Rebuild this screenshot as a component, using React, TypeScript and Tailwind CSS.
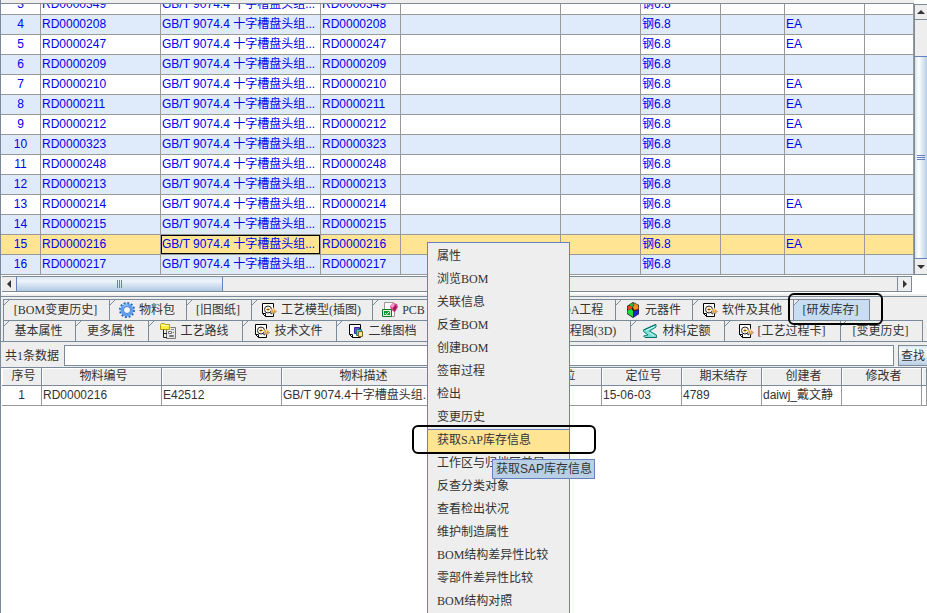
import type { ReactNode } from 'react';
import clsx from 'clsx';

interface Part {
  no: number;
  code: string;
  unit?: string;
}

interface TabItem {
  label: string;
  width: string;
  icon?: ReactNode;
  active?: boolean;
}

const parts: Part[] = [
  { no: 3, code: 'RD0000349' },
  { no: 4, code: 'RD0000208', unit: 'EA' },
  { no: 5, code: 'RD0000247', unit: 'EA' },
  { no: 6, code: 'RD0000209' },
  { no: 7, code: 'RD0000210', unit: 'EA' },
  { no: 8, code: 'RD0000211', unit: 'EA' },
  { no: 9, code: 'RD0000212', unit: 'EA' },
  { no: 10, code: 'RD0000323', unit: 'EA' },
  { no: 11, code: 'RD0000248' },
  { no: 12, code: 'RD0000213' },
  { no: 13, code: 'RD0000214', unit: 'EA' },
  { no: 14, code: 'RD0000215' },
  { no: 15, code: 'RD0000216', unit: 'EA' },
  { no: 16, code: 'RD0000217' },
];

const SELECTED = 15;

const menuItems = [
  '属性',
  '浏览BOM',
  '关联信息',
  '反查BOM',
  '创建BOM',
  '签审过程',
  '检出',
  '变更历史',
  '获取SAP库存信息',
  '工作区与归档区差异',
  '反查分类对象',
  '查看检出状况',
  '维护制造属性',
  'BOM结构差异性比较',
  '零部件差异性比较',
  'BOM结构对照',
];

const stockHeaders = ['序号', '物料编号', '财务编号', '物料描述', '数量', '单位', '定位号', '期末结存', '创建者', '修改者', ''];
const stockRow = ['1', 'RD0000216', 'E42512', 'GB/T 9074.4十字槽盘头组...', '', '', '15-06-03', '4789', 'daiwj_戴文静', '', ''];

function Icon({ children }: { children: ReactNode }) {
  return (
    <svg viewBox="0 0 16 16" className="size-4 shrink-0" aria-hidden="true">
      {children}
    </svg>
  );
}

function GearIcon() {
  return (
    <Icon>
      <circle cx="8" cy="8" r="7" fill="none" stroke="#2a62b8" strokeWidth="2" strokeDasharray="2 1.67" />
      <circle cx="8" cy="8" r="5" fill="none" stroke="#5aa0f8" strokeWidth="3" />
      <path d="M4 5a5 5 0 0 1 5-2" fill="none" stroke="#a9d0ff" strokeWidth="1" />
      <circle cx="8" cy="8" r="3.5" fill="#f4f6fa" stroke="#2a5cb0" strokeWidth="0.7" />
    </Icon>
  );
}

function CadIcon() {
  return (
    <Icon>
      <path d="M1.5 1.5h11v13h-8l-3-3z" fill="#fff" stroke="#000" />
      <path d="M1.5 11.5h3v3" fill="none" stroke="#000" />
      <circle cx="7" cy="7.5" r="3.5" fill="#fff" stroke="#222" />
      <path d="M7 5.5v4M5 7.5h4" stroke="#e8960c" />
      <path d="M6.5 7h1v1h-1z" fill="#000" />
      <path d="M8.5 10.5 11 12" stroke="#222" />
      <path d="m12.5 6 3 2.5-3 3-3-3z" fill="#e8a94a" stroke="#fff" strokeWidth="0.6" />
      <path d="m10 9.5 2.5 2.5 3-3" fill="none" stroke="#6b4708" strokeWidth="0.8" />
      <path d="M12 7.5h1v1h-1z" fill="#fff" />
    </Icon>
  );
}

function TreeIcon() {
  return (
    <Icon>
      <path d="M10.5 4.5h5v11h-9v-9" fill="#e8e8e8" stroke="#777" />
      <path d="M3.5 6v8.5H7M3.5 10.5H7" fill="none" stroke="#222" />
      <path d="M.5 1.5 1.5.5h3l1 1h4v5h-9z" fill="#ffed38" stroke="#a08c00" strokeWidth="0.8" />
      <path d="M1 2.5h8" stroke="#fffbb0" />
      <path d="M8.5 8.5h3v2h-3zM9.5 12.5h4v1h-4z" fill="#fff" stroke="#777" />
      <path d="M11 6.5h3M12.5 9.5H14" stroke="#888" />
    </Icon>
  );
}

function PcbIcon() {
  return (
    <Icon>
      <path d="M2.5.5h9l1 2v12h-10z" fill="#fff" stroke="#999" />
      <path d="m8 4 3-3 4 1 1 3-3 5-4-2z" fill="#e2418e" />
      <path d="m8 4 3-3 2 2-2 3z" fill="#f59ac4" />
      <path d="m13 3 2 2-3 5-1-4z" fill="#9c1a5d" />
      <path d="M.5 7.5h9v7h-9z" fill="#dff5df" stroke="#087a20" />
      <path d="M2 9h6v4H2z" fill="#149a30" />
      <path d="m3 11 1.5 1.5L7.5 9.5" fill="none" stroke="#fff" />
    </Icon>
  );
}

function CubeIcon() {
  return (
    <Icon>
      <path d="m8 0 6 3v9l-6 4-6-4V4z" fill="#222" />
      <path d="m5 2 3-1 1 2-2 2-2-1z" fill="#30b838" />
      <path d="m8.500 1 4.500 2 .5 4-4 1-2-3 2-1.500z" fill="#ff9020" />
      <path d="m2.500 4.500 2-1L7 5v1.500L3 8z" fill="#f04a18" />
      <path d="M2.500 8.500 6.500 7 8 9v6l-5.500-3.500z" fill="#20dc38" />
      <path d="m9 9.500 4.500-1.500v4L9 15z" fill="#1828d8" />
    </Icon>
  );
}

function SheetIcon() {
  return (
    <Icon>
      <path d="M14 1.500V4L7.500 8l7 4v2.500H3L1.500 13 6 12 1.500 8.500V7z" fill="#78ded0" stroke="#12857f" />
      <path d="M12.500 3.500 4 7.500M7 9.500l5 3.500" stroke="#c8fff6" />
      <path d="m1.500 7 12-5.500M3 14.500h11.500" stroke="#0a6a68" />
    </Icon>
  );
}

function DrawingIcon() {
  return (
    <Icon>
      <path d="M1.500 1.500h11v13h-8l-3-3z" fill="#fff" stroke="#000" />
      <path d="M1.500 11.500h3v3" fill="none" stroke="#000" />
      <path d="M6.500 4.500h5v6h-5z" fill="#6b4be0" stroke="#3420a0" />
      <path d="M8.500 6.500h5v6h-5z" fill="#58c8c8" stroke="#187878" />
      <path d="M10.500 8.500h4v5h-4z" fill="#ffe890" stroke="#7a6518" />
    </Icon>
  );
}

const upperTabs: TabItem[] = [
  { label: '[BOM变更历史]', width: 'w-[107px]' },
  { label: '物料包', width: 'w-[77px]', icon: <GearIcon /> },
  { label: '[旧图纸]', width: 'w-[65px]' },
  { label: '工艺模型(插图)', width: 'w-[121px]', icon: <CadIcon /> },
  { label: 'PCB', width: 'w-16', icon: <PcbIcon /> },
  { label: '原理图', width: 'w-[88px]', icon: <DrawingIcon /> },
  { label: 'EDA工程', width: 'w-[91px]', icon: <PcbIcon /> },
  { label: '元器件', width: 'w-[77px]', icon: <CubeIcon /> },
  { label: '软件及其他', width: 'w-[101px]', icon: <CadIcon /> },
  { label: '[研发库存]', width: 'w-[76px]', active: true },
];

const lowerTabs: TabItem[] = [
  { label: '基本属性', width: 'w-[73px]' },
  { label: '更多属性', width: 'w-[73px]' },
  { label: '工艺路线', width: 'w-[94px]', icon: <TreeIcon /> },
  { label: '技术文件', width: 'w-[94px]', icon: <CadIcon /> },
  { label: '二维图档', width: 'w-[94px]', icon: <DrawingIcon /> },
  { label: '三维图档', width: 'w-[71px]' },
  { label: '工艺流程图(3D)', width: 'w-[129px]', icon: <CadIcon /> },
  { label: '材料定额', width: 'w-[94px]', icon: <SheetIcon /> },
  { label: '[工艺过程卡]', width: 'w-[116px]', icon: <CadIcon /> },
  { label: '[变更历史]', width: 'w-[82px]' },
];

function TabRow({ tabs }: { tabs: TabItem[] }) {
  return (
    <div role="tablist" className="flex h-[21px] pl-0.5">
      {tabs.map((tab, i) => (
        <button
          key={tab.label}
          role="tab"
          aria-selected={!!tab.active}
          className={clsx(
            'relative flex shrink-0 items-center justify-center gap-1 overflow-hidden border-t border-r border-[#7a8a99] pr-0.5 leading-4 whitespace-nowrap',
            tab.width,
            tab.active ? 'bg-[#c8ddf2]' : 'bg-[#eeeeee]',
            i === 0 && 'border-l',
          )}
        >
          <svg viewBox="0 0 7 7" className="absolute -top-px -left-px size-[7px]" aria-hidden="true">
            <path d="M0 0h7L0 7z" fill="#eeeeee" />
            <path d="M.5 6.5 6.5.5" stroke="#7a8a99" />
          </svg>
          {tab.icon}
          {tab.label}
        </button>
      ))}
    </div>
  );
}

function Arrow({ points, label, className }: { points: string; label: string; className: string }) {
  return (
    <button aria-label={label} className={clsx('flex shrink-0 items-center justify-center bg-[#eeeeee]', className)}>
      <svg viewBox="0 0 8 8" className="size-2" aria-hidden="true">
        <polygon points={points} fill="#333" />
      </svg>
    </button>
  );
}

function PartsTable() {
  return (
    <div className="min-w-0 flex-1">
      <div className="h-1 border-b border-[#7a8a99] bg-[#eeeeee]" />
      <div className="flex h-[271px] flex-col justify-end overflow-hidden">
        <table className="w-full shrink-0 table-fixed border-separate border-spacing-0 font-['Liberation_Sans','Noto_Sans_CJK_SC',sans-serif] text-[#0000ee]">
          <colgroup>
            <col className="w-10" />
            <col className="w-[120px]" />
            <col className="w-40" />
            <col className="w-20" />
            <col className="w-40" />
            <col className="w-20" />
            <col className="w-20" />
            <col className="w-16" />
            <col className="w-20" />
            <col />
          </colgroup>
          <tbody>
            {parts.map((part) => {
              const selected = part.no === SELECTED;
              const cells = [part.no, part.code, 'GB/T 9074.4 十字槽盘头组...', part.code, '', '', '钢6.8', '', part.unit, ''];
              return (
                <tr
                  key={part.no}
                  className={clsx('h-5', selected ? 'bg-[#ffe494]' : part.no % 2 === 0 ? 'bg-[#dfeafb]' : 'bg-white')}
                >
                  {cells.map((cell, i) => (
                    <td
                      key={i}
                      className={clsx(
                        'overflow-hidden border-r border-b border-[#999] p-0 leading-[19px] whitespace-nowrap',
                        i === 0 ? 'text-center' : 'pl-px',
                        selected && i === 2 && 'ring-1 ring-black ring-inset',
                      )}
                    >
                      {cell}
                    </td>
                  ))}
                </tr>
              );
            })}
          </tbody>
        </table>
      </div>
    </div>
  );
}

function VerticalScroll() {
  return (
    <div className="flex w-[13px] flex-col pt-1">
      <div className="flex flex-1 flex-col border-t border-l border-[#7a8a99] bg-[#eeeeee]">
        <Arrow label="向上滚动" points="0,6 4,2 8,6" className="h-[15px] border-b border-[#7a8a99]" />
        <div className="h-9" />
        <div className="flex flex-1 flex-col items-center justify-center gap-px border-y border-[#6382bf] bg-linear-to-r from-[#d5e3f1] via-white via-30% to-[#b8cfe5]">
          <div className="h-px w-2 bg-[#6382bf]" />
          <div className="h-px w-2 bg-[#6382bf]" />
          <div className="h-px w-2 bg-[#6382bf]" />
        </div>
        <Arrow label="向下滚动" points="0,2 4,6 8,2" className="h-4 border-b border-[#7a8a99]" />
      </div>
    </div>
  );
}

function HorizontalScroll() {
  return (
    <div className="mr-[15px] ml-px flex h-4 border-y border-[#7a8a99] bg-[#eeeeee]">
      <Arrow label="向左滚动" points="6,0 2,4 6,8" className="w-[14px]" />
      <div className="flex w-[207px] items-center justify-center gap-px border-x border-[#6382bf] bg-linear-to-b from-[#dce8f5] via-[#edf3fa] via-30% to-[#b0c9e3]">
        <div className="h-2 w-px bg-[#6382bf]" />
        <div className="h-2 w-px bg-[#6382bf]" />
        <div className="h-2 w-px bg-[#6382bf]" />
      </div>
      <div className="flex-1" />
      <Arrow label="向右滚动" points="2,0 6,4 2,8" className="w-[15px] border-x border-[#7a8a99]" />
    </div>
  );
}

function SearchBar() {
  return (
    <div className="flex h-[21px] items-center">
      <label htmlFor="keyword" className="w-[63px] shrink-0 pl-1 leading-4 whitespace-nowrap">
        共1条数据
      </label>
      <input
        id="keyword"
        className="h-full min-w-0 flex-1 border border-[#7a8a99] bg-white px-1 outline-none"
      />
      <button className="ml-1 h-full w-[29px] shrink-0 overflow-hidden border border-r-0 border-[#7a8a99] bg-linear-to-b from-[#dde8f3] via-white via-30% to-[#b8cfe5] pl-0.5 text-left whitespace-nowrap">
        查找
      </button>
    </div>
  );
}

function StockTable() {
  return (
    <div className="border-t border-[#7a8a99] pl-px">
      <table className="w-full table-fixed border-separate border-spacing-0">
        <colgroup>
          <col className="w-10" />
          <col className="w-[120px]" />
          <col className="w-[120px]" />
          <col className="w-40" />
          <col className="w-20" />
          <col className="w-20" />
          <col className="w-20" />
          <col className="w-20" />
          <col className="w-20" />
          <col className="w-20" />
          <col />
        </colgroup>
        <thead>
          <tr className="h-[18px] bg-[#eeeeee]">
            {stockHeaders.map((header, i) => (
              <th
                key={i}
                className="overflow-hidden border-r border-b border-[#7a8a99] p-0 pl-1 leading-[17px] font-normal whitespace-nowrap shadow-[inset_1px_1px_0_#fff]"
              >
                {header}
              </th>
            ))}
          </tr>
        </thead>
        <tbody className="font-['Liberation_Sans','Noto_Sans_CJK_SC',sans-serif]">
          <tr className="h-5 bg-white">
            {stockRow.map((cell, i) => (
              <td
                key={i}
                className={clsx(
                  'overflow-hidden border-r border-b border-[#999] p-0 leading-[19px] whitespace-nowrap',
                  i === 0 ? 'text-center' : 'pl-px',
                )}
              >
                {cell}
              </td>
            ))}
          </tr>
        </tbody>
      </table>
    </div>
  );
}

function ContextMenu() {
  return (
    <div
      role="menu"
      className="absolute top-[242px] left-[426px] flex w-[143px] flex-col border border-b-0 border-[#6382bf] bg-[#eeeeee] pt-0.5"
    >
      {menuItems.map((item) => (
        <button
          key={item}
          role="menuitem"
          className={clsx(
            'h-[23px] border-t pb-0.5 pl-[9px] text-left leading-5 whitespace-nowrap',
            item === '获取SAP库存信息' ? 'border-[#6382bf] bg-[#ffe494]' : 'border-transparent',
          )}
        >
          {item}
        </button>
      ))}
    </div>
  );
}

export default function App() {
  return (
    <div className="relative min-h-screen overflow-hidden border-l border-[#7a8a99] bg-white font-['Liberation_Serif','Noto_Sans_CJK_SC',serif] text-xs text-[#333]">
      <div className="flex">
        <PartsTable />
        <VerticalScroll />
      </div>
      <div className="pt-px">
        <HorizontalScroll />
      </div>

      <div className="mt-0.5 bg-[#eeeeee] pt-0.5">
        <div className="border-t border-[#7a8a99] pt-0.5">
          <TabRow tabs={upperTabs} />
          <TabRow tabs={lowerTabs} />
        </div>
        <div className="border-t border-[#7a8a99] pt-[3px] pb-px">
          <SearchBar />
        </div>
      </div>
      <StockTable />

      <div className="pointer-events-none absolute top-[293px] left-[787px] h-8 w-[95px] rounded-md border-2 border-black" />
      <ContextMenu />
      <div className="pointer-events-none absolute top-[425px] left-[411px] h-[29px] w-[184px] rounded-md border-2 border-black" />
      <div
        role="tooltip"
        className="absolute top-[459px] left-[491px] h-5 w-[103px] border border-[#6382bf] bg-[#b8cfe5] px-[3px] font-['Liberation_Sans','Noto_Sans_CJK_SC',sans-serif] leading-[18px] whitespace-nowrap"
      >
        获取SAP库存信息
      </div>
    </div>
  );
}
